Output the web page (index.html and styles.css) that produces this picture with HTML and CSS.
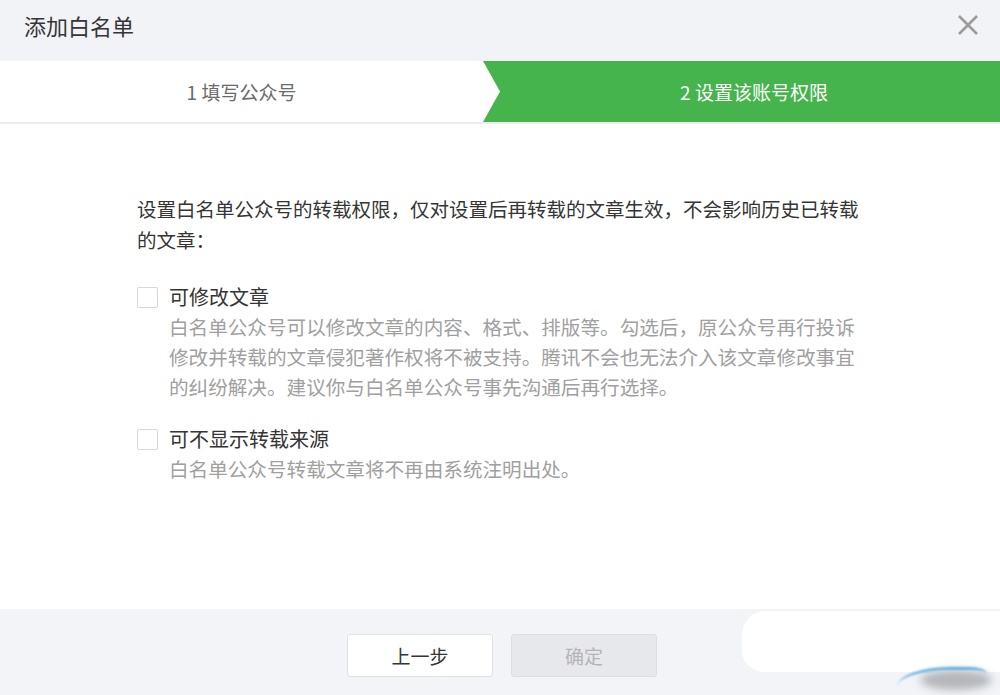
FILE: index.html
```html
<!DOCTYPE html>
<html lang="zh-CN">
<head>
<meta charset="utf-8">
<title>添加白名单</title>
<link rel="stylesheet" href="styles.css">
</head>
<body>
<div class="dialog">
  <div class="dlg-header">
    <h3 class="dlg-title">添加白名单</h3>
    <span class="dlg-close">
      <svg width="22" height="22" viewBox="0 0 22 22"><path d="M2 2 L20 20 M20 2 L2 20" stroke="#9b9b9b" stroke-width="2.6" fill="none"/></svg>
    </span>
  </div>
  <div class="steps">
    <div class="step step-done">1 填写公众号</div>
    <div class="step step-current">2 设置该账号权限</div>
  </div>
  <div class="dlg-body">
    <p class="intro">设置白名单公众号的转载权限，仅对设置后再转载的文章生效，不会影响历史已转载的文章：</p>
    <div class="option opt-first">
      <span class="checkbox"></span>
      <div class="opt-text">
        <div class="opt-label">可修改文章</div>
        <div class="opt-desc">白名单公众号可以修改文章的内容、格式、排版等。勾选后，原公众号再行投诉修改并转载的文章侵犯著作权将不被支持。腾讯不会也无法介入该文章修改事宜的纠纷解决。建议你与白名单公众号事先沟通后再行选择。</div>
      </div>
    </div>
    <div class="option opt-second">
      <span class="checkbox"></span>
      <div class="opt-text">
        <div class="opt-label">可不显示转载来源</div>
        <div class="opt-desc">白名单公众号转载文章将不再由系统注明出处。</div>
      </div>
    </div>
  </div>
  <div class="dlg-footer">
    <button class="btn btn-default">上一步</button>
    <button class="btn btn-disabled">确定</button>
  </div>
  <div class="wm-white"></div>
  <div class="wm-grey"></div>
  <div class="wm-blue"></div>
</div>
</body>
</html>
```
FILE: styles.css
```css
html, body {
  margin: 0;
  padding: 0;
  background: #ffffff;
}
body {
  font-family: "Noto Sans CJK SC", "Noto Sans", "Liberation Sans", sans-serif;
  color: #353535;
}
.dialog {
  position: relative;
  width: 1000px;
  height: 695px;
  overflow: hidden;
  display: flex;
  flex-direction: column;
}
.dlg-header {
  height: 61px;
  background: #f1f3f7;
  display: flex;
  align-items: center;
  justify-content: space-between;
  padding: 0 21px 0 24px;
  flex: none;
}
.dlg-title {
  margin: 0;
  font-size: 22px;
  font-weight: normal;
  color: #353535;
  line-height: 30px;
  margin-top: -12px;
}
.dlg-close {
  display: flex;
  margin-top: -12px;
}
.steps {
  height: 61px;
  flex: none;
  display: flex;
  background: #45b44c;
  border-bottom: 2px solid #ebecef;
}
.step {
  display: flex;
  align-items: center;
  justify-content: center;
  font-size: 19px;
}
.step-done {
  width: 500px;
  padding-right: 17px;
  box-sizing: border-box;
  background: #ffffff;
  color: #6b6b6b;
  clip-path: polygon(0 0, 483px 0, 500px 50%, 483px 100%, 0 100%);
}
.step-current {
  flex: 1;
  color: #ffffff;
  padding-left: 8px;
}
.dlg-body {
  flex: 1;
  padding: 69px 130px 0 137px;
}
.intro {
  margin: 0;
  font-size: 19.5px;
  line-height: 31px;
  color: #353535;
}
.option {
  display: flex;
  gap: 10px;
}
.opt-first {
  margin-top: 27px;
}
.opt-second {
  margin-top: 22px;
}
.checkbox {
  flex: none;
  width: 19px;
  height: 19px;
  border: 1px solid #d6d7da;
  border-radius: 2px;
  background: #ffffff;
  margin-top: 5px;
}
.opt-text {
  flex: 1;
  padding-left: 1px;
  padding-right: 10px;
}
.opt-label {
  font-size: 20px;
  line-height: 30px;
  color: #353535;
}
.opt-desc {
  font-size: 19.6px;
  line-height: 30px;
  color: #a0a0a0;
}
.dlg-footer {
  height: 86px;
  flex: none;
  background: #f2f4f8;
  display: flex;
  justify-content: center;
  align-items: flex-start;
  gap: 18px;
  padding-top: 25px;
  padding-left: 4px;
  box-sizing: border-box;
}
.btn {
  width: 146px;
  height: 43px;
  border-radius: 3px;
  font-family: "Noto Sans CJK SC", "Noto Sans", sans-serif;
  font-size: 19px;
  padding: 0;
}
.btn-default {
  background: #ffffff;
  border: 1px solid #e0e1e6;
  color: #353535;
}
.btn-disabled {
  background: #e7e8ec;
  border: 1px solid #dcdde2;
  color: #b4b4b4;
}
.wm-white {
  position: absolute;
  left: 742px;
  top: 611px;
  width: 280px;
  height: 61px;
  background: #ffffff;
  border-radius: 24px 0 0 22px;
}
.wm-grey {
  position: absolute;
  left: 920px;
  top: 670px;
  width: 72px;
  height: 20px;
  border-radius: 50%;
  background: #9a9ca0;
  filter: blur(4px);
  opacity: 0.7;
}
.wm-blue {
  position: absolute;
  left: 897px;
  top: 667px;
  width: 90px;
  height: 30px;
  border-top: 3px solid #4aa3e0;
  border-radius: 60% 20% 0 0;
  filter: blur(1px);
  opacity: 0.85;
}
```
